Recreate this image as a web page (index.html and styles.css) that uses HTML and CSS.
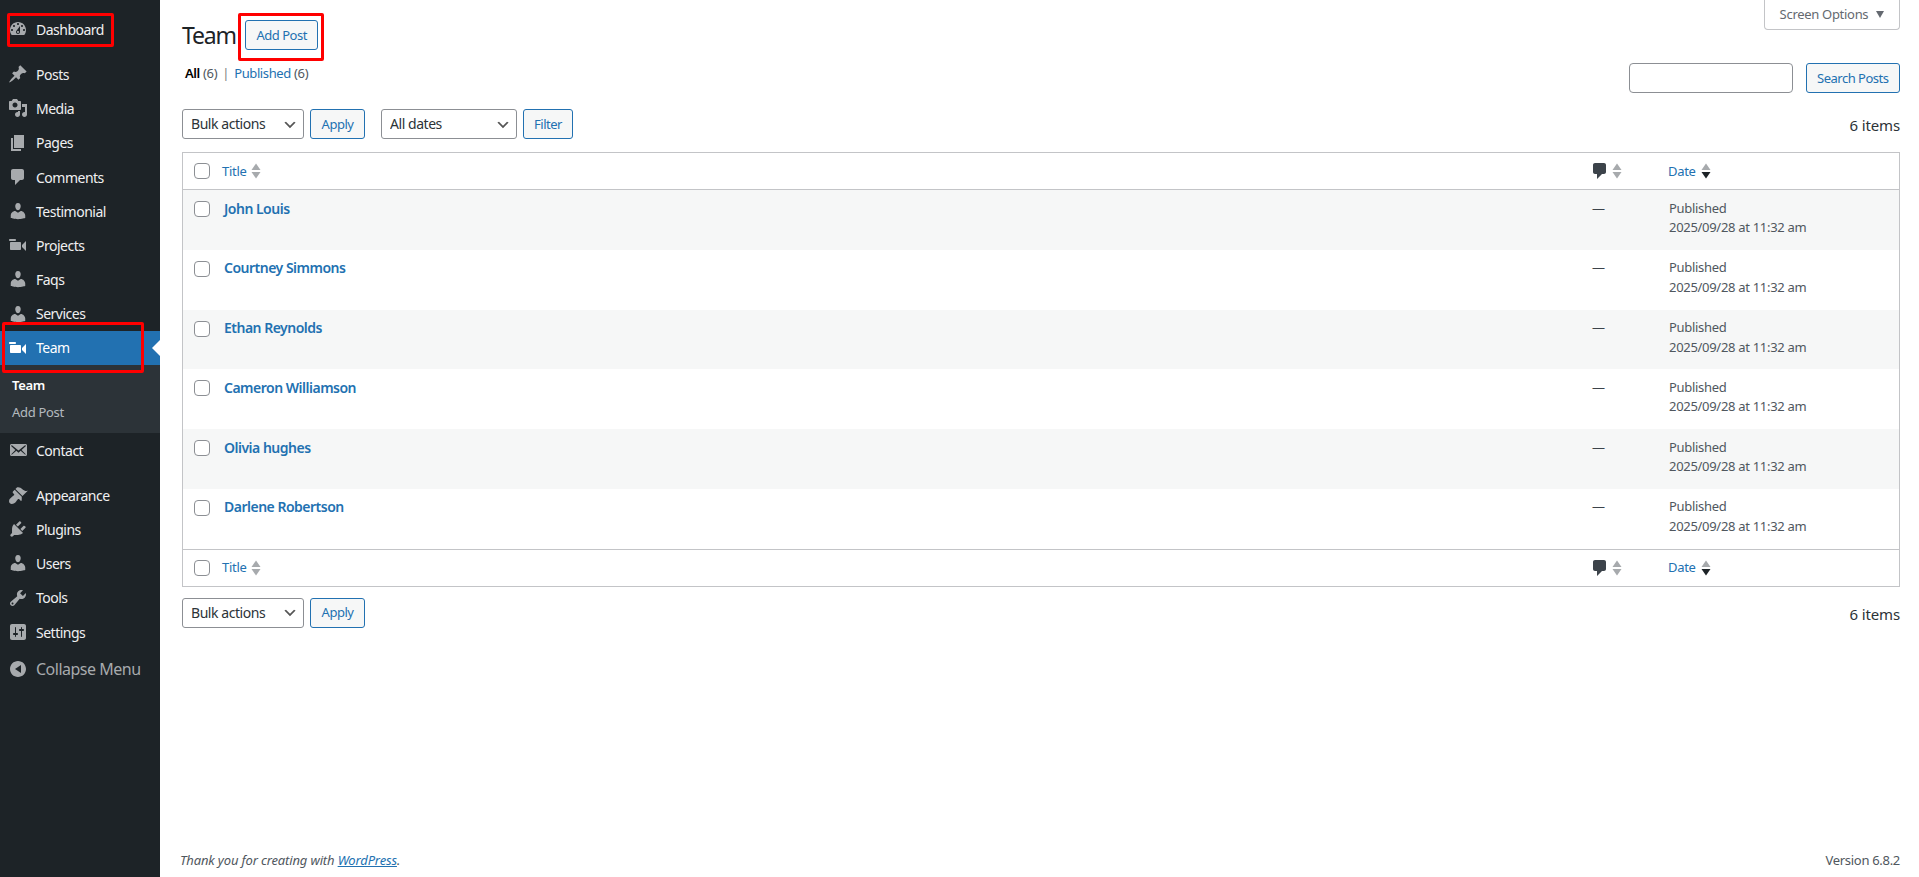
FILE: index.html
```html
<!DOCTYPE html>
<html lang="en">
<head>
  <meta charset="UTF-8" />
  <title>Team ‹ WordPress</title>
  <link rel="stylesheet" href="styles.css">
</head>
<body>
  <svg class="icon-defs" xmlns="http://www.w3.org/2000/svg">
    <symbol id="i-dashboard" viewBox="0 0 20 20"><path fill-rule="evenodd" d="M3.76 16h12.48c1.1-1.37 1.76-3.11 1.76-5 0-4.42-3.58-8-8-8s-8 3.58-8 8c0 1.89.66 3.63 1.76 5zM10 4c.55 0 1 .45 1 1s-.45 1-1 1-1-.45-1-1 .45-1 1-1zM6 6c.55 0 1 .45 1 1s-.45 1-1 1-1-.45-1-1 .45-1 1-1zm8 0c.55 0 1 .45 1 1s-.45 1-1 1-1-.45-1-1 .45-1 1-1zm-5.37 5.55L12 7v6c0 1.1-.9 2-2 2s-2-.9-2-2c0-.57.24-1.08.63-1.45zM4 10c.55 0 1 .45 1 1s-.45 1-1 1-1-.45-1-1 .45-1 1-1zm12 0c.55 0 1 .45 1 1s-.45 1-1 1-1-.45-1-1 .45-1 1-1zm-5 3c0-.55-.45-1-1-1s-1 .45-1 1 .45 1 1 1 1-.45 1-1z"/></symbol>
    <symbol id="i-pin" viewBox="0 0 20 20"><path d="M10.44 3.02l1.82-1.82 6.36 6.35-1.83 1.82c-1.05-.68-2.48-.57-3.41.36l-.75.75c-.92.93-1.04 2.35-.35 3.41l-1.83 1.82-2.41-2.41-2.8 2.79c-.42.42-3.38 2.71-3.8 2.29s1.86-3.39 2.28-3.81l2.79-2.79L4.1 9.36l1.83-1.82c1.05.69 2.48.57 3.4-.36l.75-.75c.93-.92 1.05-2.35.36-3.41z"/></symbol>
    <symbol id="i-media" viewBox="0 0 20 20"><path fill-rule="evenodd" d="M13 11V4c0-.55-.45-1-1-1h-1.67L9 1H5L3.67 3H2c-.55 0-1 .45-1 1v7c0 .55.45 1 1 1h10c.55 0 1-.45 1-1zM7 4.5c1.38 0 2.5 1.12 2.5 2.5S8.38 9.5 7 9.5 4.5 8.38 4.5 7 5.62 4.5 7 4.5zM14 6h5v10.5c0 1.38-1.12 2.5-2.5 2.5S14 17.88 14 16.5s1.12-2.5 2.5-2.5c.17 0 .34.02.5.05V9h-3V6zm-4 8.05V13h2v3.5c0 1.38-1.12 2.5-2.5 2.5S7 17.88 7 16.5 8.12 14 9.5 14c.17 0 .34.02.5.05z"/></symbol>
    <symbol id="i-page" viewBox="0 0 20 20"><path d="M6 15V2h10v13H6zm-1 1h8v2H3V5h2v11z"/></symbol>
    <symbol id="i-comment" viewBox="0 0 20 20"><path d="M5 2h9c1.1 0 2 .9 2 2v7c0 1.1-.9 2-2 2h-2l-5 5v-5H5c-1.1 0-2-.9-2-2V4c0-1.1.9-2 2-2z"/></symbol>
    <symbol id="i-user" viewBox="0 0 20 20"><path d="M10 9.25c-2.27 0-2.73-3.44-2.73-3.44C7 4.02 7.82 2 9.97 2c2.16 0 2.98 2.02 2.71 3.81 0 0-.41 3.44-2.68 3.44zm0 2.57L12.72 10c2.39 0 4.52 2.33 4.52 4.53v2.49s-3.65 1.13-7.24 1.13c-3.65 0-7.24-1.13-7.24-1.13v-2.49c0-2.25 1.94-4.48 4.47-4.48z"/></symbol>
    <symbol id="i-video" viewBox="0 0 20 20"><path d="M8 5c0-.55-.45-1-1-1H2c-.55 0-1 .45-1 1 0 .57.49 1 1 1h5c.55 0 1-.45 1-1zm6 5l4-4v10l-4-4v-2zm-1 4V8c0-.55-.45-1-1-1H3c-.55 0-1 .45-1 1v6c0 .55.45 1 1 1h9c.55 0 1-.45 1-1z"/></symbol>
    <symbol id="i-mail" viewBox="0 0 20 20"><path fill-rule="evenodd" d="M19 14.5v-9c0-.83-.67-1.5-1.5-1.5H3.49c-.83 0-1.5.67-1.5 1.5v9c0 .83.67 1.5 1.5 1.5H17.5c.83 0 1.5-.67 1.5-1.5zm-1.31-9.11c.33.33.15.67-.03.84L13.6 9.95l3.9 4.06c.12.14.2.36.06.51-.13.16-.43.15-.56.05l-4.37-3.73-2.14 1.95-2.13-1.95-4.37 3.73c-.13.1-.43.11-.56-.05-.14-.15-.06-.37.06-.51l3.9-4.06-4.06-3.72c-.18-.17-.36-.51-.03-.84s.67-.17.95.07l6.24 5.04 6.25-5.04c.28-.24.62-.4.95-.07z"/></symbol>
    <symbol id="i-brush" viewBox="0 0 20 20"><path d="M14.48 11.06L7.41 3.99l1.5-1.5c.5-.56 2.3-.47 3.51.32 1.21.8 1.43 1.28 2.91 2.1 1.18.64 2.45 1.26 4.45.85zm-.71.71L6.7 4.7 4.93 6.47c-.39.39-.39 1.02 0 1.41l1.06 1.06c.39.39.39 1.03 0 1.42-.6.6-1.43 1.11-2.21 1.69-.35.26-.7.53-1.01.84C1.43 13.71.96 15.12 1.1 16.7c.01.31.1.59.24.86.44.85 1.28 1.4 2.24 1.4 1.42.11 2.76-.4 3.75-1.39.31-.31.57-.66.84-1.01.58-.78 1.09-1.61 1.69-2.21.39-.39 1.03-.39 1.42 0l1.06 1.06c.39.39 1.02.39 1.41 0z"/></symbol>
    <symbol id="i-plug" viewBox="0 0 20 20"><path d="M13.11 4.36L9.87 7.6 8 5.73l3.24-3.24c.35-.34 1.05-.2 1.56.32.52.51.66 1.21.31 1.55zm-8 1.77l.91-1.12 9.01 9.01-1.19.84c-.71.71-2.63 1.16-3.82 1.16H6.14L4.9 17.26c-.59.59-1.54.59-2.12 0-.59-.58-.59-1.53 0-2.12l1.24-1.24v-3.88c0-1.13.4-3.19 1.09-3.89zm7.26 3.97l3.24-3.24c.34-.35 1.04-.21 1.55.31.52.51.66 1.21.31 1.55l-3.24 3.25z"/></symbol>
    <symbol id="i-wrench" viewBox="0 0 20 20"><path fill-rule="evenodd" d="M16.68 9.77c-1.34 1.34-3.3 1.67-4.95.99l-5.41 6.52c-.99.99-2.59.99-3.58 0s-.99-2.59 0-3.57l6.52-5.42c-.68-1.65-.35-3.61.99-4.95 1.28-1.28 3.12-1.62 4.72-1.06l-2.89 2.89 2.82 2.82 2.86-2.87c.53 1.58.18 3.39-1.08 4.65zM3.81 16.21c.4.39 1.04.39 1.43 0 .4-.4.4-1.04 0-1.43-.39-.4-1.03-.4-1.43 0-.39.39-.39 1.03 0 1.43z"/></symbol>
    <symbol id="i-sliders" viewBox="0 0 20 20"><path fill-rule="evenodd" d="M18 16V4c0-1.1-.9-2-2-2H4c-1.1 0-2 .9-2 2v12c0 1.1.9 2 2 2h12c1.1 0 2-.9 2-2zM8 11h1c.55 0 1 .45 1 1s-.45 1-1 1H8v1.5c0 .28-.22.5-.5.5s-.5-.22-.5-.5V13H6c-.55 0-1-.45-1-1s.45-1 1-1h1V5.5c0-.28.22-.5.5-.5s.5.22.5.5V11zm5-2h-1c-.55 0-1-.45-1-1s.45-1 1-1h1V5.5c0-.28.22-.5.5-.5s.5.22.5.5V7h1c.55 0 1 .45 1 1s-.45 1-1 1h-1v5.5c0 .28-.22.5-.5.5s-.5-.22-.5-.5V9z"/></symbol>
    <symbol id="i-collapse" viewBox="0 0 20 20"><path fill-rule="evenodd" d="M18 10c0-4.42-3.58-8-8-8s-8 3.58-8 8 3.58 8 8 8 8-3.58 8-8zm-5-4v8l-6-4z"/></symbol>
    <symbol id="i-sort" viewBox="0 0 16 20"><path class="sort-up" d="M8 2.5l4.5 6.5h-9z"/><path class="sort-down" d="M3.5 11h9L8 17.5z"/></symbol>
  </svg>

  <div class="red-box red-dashboard"></div>
  <div class="red-box red-add"></div>
  <div class="red-box red-team"></div>

  <div class="admin">
    <nav class="sidebar">
      <ul class="menu">
        <li><a class="item" href="#"><svg class="mi"><use href="#i-dashboard"/></svg>Dashboard</a></li>
        <li class="sep"></li>
        <li><a class="item" href="#"><svg class="mi"><use href="#i-pin"/></svg>Posts</a></li>
        <li><a class="item" href="#"><svg class="mi"><use href="#i-media"/></svg>Media</a></li>
        <li><a class="item" href="#"><svg class="mi"><use href="#i-page"/></svg>Pages</a></li>
        <li><a class="item" href="#"><svg class="mi"><use href="#i-comment"/></svg>Comments</a></li>
        <li><a class="item" href="#"><svg class="mi"><use href="#i-user"/></svg>Testimonial</a></li>
        <li><a class="item" href="#"><svg class="mi"><use href="#i-video"/></svg>Projects</a></li>
        <li><a class="item" href="#"><svg class="mi"><use href="#i-user"/></svg>Faqs</a></li>
        <li><a class="item" href="#"><svg class="mi"><use href="#i-user"/></svg>Services</a></li>
        <li class="active"><a class="item" href="#"><svg class="mi"><use href="#i-video"/></svg>Team</a></li>
        <li class="submenu">
          <a class="current" href="#">Team</a>
          <a href="#">Add Post</a>
        </li>
        <li><a class="item" href="#"><svg class="mi"><use href="#i-mail"/></svg>Contact</a></li>
        <li class="sep"></li>
        <li><a class="item" href="#"><svg class="mi"><use href="#i-brush"/></svg>Appearance</a></li>
        <li><a class="item" href="#"><svg class="mi"><use href="#i-plug"/></svg>Plugins</a></li>
        <li><a class="item" href="#"><svg class="mi"><use href="#i-user"/></svg>Users</a></li>
        <li><a class="item" href="#"><svg class="mi"><use href="#i-wrench"/></svg>Tools</a></li>
        <li><a class="item" href="#"><svg class="mi"><use href="#i-sliders"/></svg>Settings</a></li>
        <li class="collapse"><a class="item" href="#"><svg class="mi"><use href="#i-collapse"/></svg>Collapse Menu</a></li>
      </ul>
    </nav>

    <div class="content">
      <div class="screen-meta"><button class="screen-options">Screen Options <span class="caret"></span></button></div>

      <main class="wrap">
        <div class="heading">
          <h1>Team</h1>
          <a class="btn" href="#">Add Post</a>
        </div>

        <div class="filters">
          <ul class="subsubsub">
            <li><a class="on" href="#">All</a> <span class="count">(6)</span></li>
            <li class="bar">|</li>
            <li><a href="#">Published</a> <span class="count">(6)</span></li>
          </ul>
          <div class="search">
            <input type="search" />
            <a class="btn" href="#">Search Posts</a>
          </div>
        </div>

        <div class="tablenav top">
          <select class="sel-bulk"><option>Bulk actions</option></select>
          <a class="btn btn-apply" href="#">Apply</a>
          <select class="sel-dates"><option>All dates</option></select>
          <a class="btn btn-filter" href="#">Filter</a>
          <span class="num">6 items</span>
        </div>

        <table class="posts">
          <thead>
            <tr>
              <th class="col-cb"><input type="checkbox" /></th>
              <th class="col-title"><a href="#">Title<svg class="sort"><use href="#i-sort"/></svg></a></th>
              <th class="col-comments"><svg class="cm"><use href="#i-comment"/></svg><svg class="sort"><use href="#i-sort"/></svg></th>
              <th class="col-date sorted"><a href="#">Date<svg class="sort"><use href="#i-sort"/></svg></a></th>
            </tr>
          </thead>
          <tbody>
            <tr>
              <td class="col-cb"><input type="checkbox" /></td>
              <td class="name"><a href="#">John Louis</a></td>
              <td class="dash">—</td>
              <td class="when">Published<br>2025/09/28 at 11:32 am</td>
            </tr>
            <tr>
              <td class="col-cb"><input type="checkbox" /></td>
              <td class="name"><a href="#">Courtney Simmons</a></td>
              <td class="dash">—</td>
              <td class="when">Published<br>2025/09/28 at 11:32 am</td>
            </tr>
            <tr>
              <td class="col-cb"><input type="checkbox" /></td>
              <td class="name"><a href="#">Ethan Reynolds</a></td>
              <td class="dash">—</td>
              <td class="when">Published<br>2025/09/28 at 11:32 am</td>
            </tr>
            <tr>
              <td class="col-cb"><input type="checkbox" /></td>
              <td class="name"><a href="#">Cameron Williamson</a></td>
              <td class="dash">—</td>
              <td class="when">Published<br>2025/09/28 at 11:32 am</td>
            </tr>
            <tr>
              <td class="col-cb"><input type="checkbox" /></td>
              <td class="name"><a href="#">Olivia hughes</a></td>
              <td class="dash">—</td>
              <td class="when">Published<br>2025/09/28 at 11:32 am</td>
            </tr>
            <tr>
              <td class="col-cb"><input type="checkbox" /></td>
              <td class="name"><a href="#">Darlene Robertson</a></td>
              <td class="dash">—</td>
              <td class="when">Published<br>2025/09/28 at 11:32 am</td>
            </tr>
          </tbody>
          <tfoot>
            <tr>
              <th class="col-cb"><input type="checkbox" /></th>
              <th class="col-title"><a href="#">Title<svg class="sort"><use href="#i-sort"/></svg></a></th>
              <th class="col-comments"><svg class="cm"><use href="#i-comment"/></svg><svg class="sort"><use href="#i-sort"/></svg></th>
              <th class="col-date sorted"><a href="#">Date<svg class="sort"><use href="#i-sort"/></svg></a></th>
            </tr>
          </tfoot>
        </table>

        <div class="tablenav bottom">
          <select class="sel-bulk"><option>Bulk actions</option></select>
          <a class="btn btn-apply" href="#">Apply</a>
          <span class="num">6 items</span>
        </div>
      </main>

      <footer class="footer">
        <span class="thanks">Thank you for creating with <a href="#">WordPress</a>.</span>
        <span>Version 6.8.2</span>
      </footer>
    </div>
  </div>
</body>
</html>
```

FILE: styles.css
```css
:root {
  --ink: #1d2327;
  --link: #2271b1;
  --line: #c3c4c7;
  --soft: #f6f7f7;
  --muted: #50575e;
}

* {
  box-sizing: border-box;
}

body {
  margin: 0;
  background: #fff;
  color: #3c434a;
  font-family: "Noto Sans", "Open Sans", sans-serif;
  font-size: 13px;
  letter-spacing: -0.3px;
  line-height: 1.4;
}

a {
  color: var(--link);
  text-decoration: none;
}

ul {
  list-style: none;
  margin: 0;
  padding: 0;
}

.icon-defs {
  display: none;
}

.admin {
  display: flex;
  min-height: 100vh;
}

/* sidebar */
.sidebar {
  width: 160px;
  flex: none;
  background: var(--ink);
}

.menu {
  padding: 12px 0;
}

.item {
  display: flex;
  align-items: center;
  height: 34.2px;
  padding: 1px 0 0 36px;
  position: relative;
  color: #f0f0f1;
  font-size: 14px;
  letter-spacing: -0.5px;
}

.mi {
  position: absolute;
  left: 8px;
  top: 7px;
  width: 20px;
  height: 20px;
  fill: #a7aaad;
}

.sep {
  height: 11px;
}

.active .item {
  background: var(--link);
  color: #fff;
}

.active .mi {
  fill: #fff;
}

.active .item::after {
  content: "";
  position: absolute;
  right: 0;
  top: 50%;
  margin-top: -8px;
  border: 8px solid transparent;
  border-right-color: #fff;
  border-left-width: 0;
}

.submenu {
  background: #2c3338;
  padding: 7px 0 6px;
}

.submenu a {
  display: block;
  padding: 5px 12px;
  line-height: 17.5px;
  color: rgba(240, 246, 252, 0.7);
}

.submenu .current {
  color: #fff;
  font-weight: 600;
}

.collapse .item {
  height: 34px;
  margin-top: 3px;
  color: #a7aaad;
  font-size: 16px;
}

/* main */
.content {
  flex: 1;
  min-width: 0;
  display: flex;
  flex-direction: column;
}

.screen-meta {
  display: flex;
  justify-content: flex-end;
  padding-right: 19px;
}

.screen-options {
  width: 136px;
  height: 30px;
  background: #fff;
  border: 1px solid var(--line);
  border-top: 0;
  border-radius: 0 0 4px 4px;
  color: #646970;
  font: inherit;
  letter-spacing: inherit;
}

.caret {
  display: inline-block;
  margin-left: 5px;
  border: 4.5px solid transparent;
  border-top: 7px solid #646970;
  border-bottom: 0;
  vertical-align: 1px;
}

.wrap {
  flex: 1;
  padding: 0 19px 0 22px;
  margin-top: -10px;
}

.heading {
  display: flex;
  align-items: center;
  height: 30px;
}

h1 {
  width: 63px;
  margin: 0;
  color: var(--ink);
  font-size: 23px;
  font-weight: 400;
  letter-spacing: -1.2px;
}

.btn {
  display: inline-flex;
  align-items: center;
  justify-content: center;
  height: 30px;
  padding: 0 10.5px;
  background: var(--soft);
  border: 1px solid var(--link);
  border-radius: 3px;
  color: var(--link);
  font-size: 13px;
  letter-spacing: -0.5px;
}

.btn-apply {
  width: 55px;
}

.btn-filter {
  width: 50px;
}

.filters {
  display: flex;
  justify-content: space-between;
  margin-top: 13px;
}

.subsubsub {
  display: flex;
  gap: 5px;
  padding: 1px 0 0 3px;
  color: #646970;
}

.subsubsub a {
  letter-spacing: -0.4px;
}

.subsubsub .on {
  color: #000;
  font-weight: 600;
}

.bar {
  color: #787c82;
}

.count {
  color: #50575e;
}

.search {
  display: flex;
  gap: 13px;
}

.search input {
  width: 164px;
  height: 30px;
  border: 1px solid #8c8f94;
  border-radius: 4px;
  background: #fff;
}

.tablenav {
  display: flex;
  align-items: center;
  gap: 6px;
  height: 30px;
}

.tablenav.top {
  margin-top: 16px;
}

.tablenav.bottom {
  margin-top: 11px;
}

select {
  height: 30px;
  padding: 0 24px 0 8px;
  background: #fff url("data:image/svg+xml;utf8,<svg xmlns='http://www.w3.org/2000/svg' width='20' height='20'><path d='M5 6l5 5 5-5 2 1-7 7-7-7z' fill='%23555'/></svg>") no-repeat right 5px top 55%;
  background-size: 16px 16px;
  border: 1px solid #8c8f94;
  border-radius: 3px;
  color: #2c3338;
  font: inherit;
  font-size: 14px;
  letter-spacing: -0.45px;
  appearance: none;
}

.sel-bulk {
  width: 122px;
}

.sel-dates {
  width: 136px;
  margin-left: 10px;
}

.num {
  margin-left: auto;
  padding-top: 3px;
  color: #2c3338;
  font-size: 15px;
  letter-spacing: -0.15px;
}

/* table */
.posts {
  width: 100%;
  margin-top: 13px;
  border: 1px solid var(--line);
  border-collapse: separate;
  border-spacing: 0;
  table-layout: fixed;
  background: #fff;
}

.posts th,
.posts td {
  padding: 0;
  text-align: left;
  font-weight: 400;
  vertical-align: top;
}

.posts thead th {
  height: 37px;
  border-bottom: 1px solid var(--line);
  vertical-align: middle;
}

.posts tfoot th {
  height: 37px;
  border-top: 1px solid var(--line);
  vertical-align: middle;
}

.posts tbody tr {
  height: 59.75px;
}

.posts tbody tr:nth-child(odd) td {
  background: var(--soft);
}

.col-cb {
  width: 39px;
}

.posts .col-cb {
  padding-left: 11px;
}

.posts input[type="checkbox"] {
  display: block;
  width: 16px;
  height: 16px;
  margin: 0;
  background: #fff;
  border: 1px solid #8c8f94;
  border-radius: 4px;
  appearance: none;
}

.posts tbody .col-cb {
  padding-top: 11px;
}

.col-comments {
  width: 84px;
}

.col-date {
  width: 231px;
}

.posts th a {
  display: inline-flex;
  align-items: center;
}

.posts .col-comments {
  padding-left: 6px;
}

.sort {
  width: 16px;
  height: 20px;
  vertical-align: middle;
  margin-left: 2px;
}

.sort-up {
  fill: #a7aaad;
}

.sort-down {
  fill: var(--sort-down, #a7aaad);
}

.sorted {
  --sort-down: #1d2327;
}

.cm {
  width: 20px;
  height: 20px;
  vertical-align: middle;
  fill: #3c434a;
}

.cm + .sort {
  margin-left: -1px;
}

.posts .name {
  padding: 8.5px 0 0 2px;
  font-size: 14px;
  font-weight: 600;
  letter-spacing: -0.5px;
}

.posts .dash {
  padding: 8.5px 0 0 8px;
}

.posts .when {
  padding: 8.5px 0 0 1px;
  color: var(--muted);
  line-height: 19.5px;
}

/* footer */
.footer {
  display: flex;
  justify-content: space-between;
  padding: 0 19px 8px 20px;
  color: var(--muted);
  font-size: 13px;
}

.thanks {
  font-style: italic;
  letter-spacing: -0.15px;
}

.thanks a {
  text-decoration: underline;
}

/* red annotations drawn over the screenshot */
.red-box {
  position: absolute;
  border: 3px solid #f00;
  border-radius: 2px;
  pointer-events: none;
  z-index: 5;
}

.red-dashboard {
  left: 7px;
  top: 13px;
  width: 107px;
  height: 34px;
}

.red-add {
  left: 238px;
  top: 13px;
  width: 86px;
  height: 48px;
}

.red-team {
  left: 2px;
  top: 322px;
  width: 142px;
  height: 51px;
}
```
